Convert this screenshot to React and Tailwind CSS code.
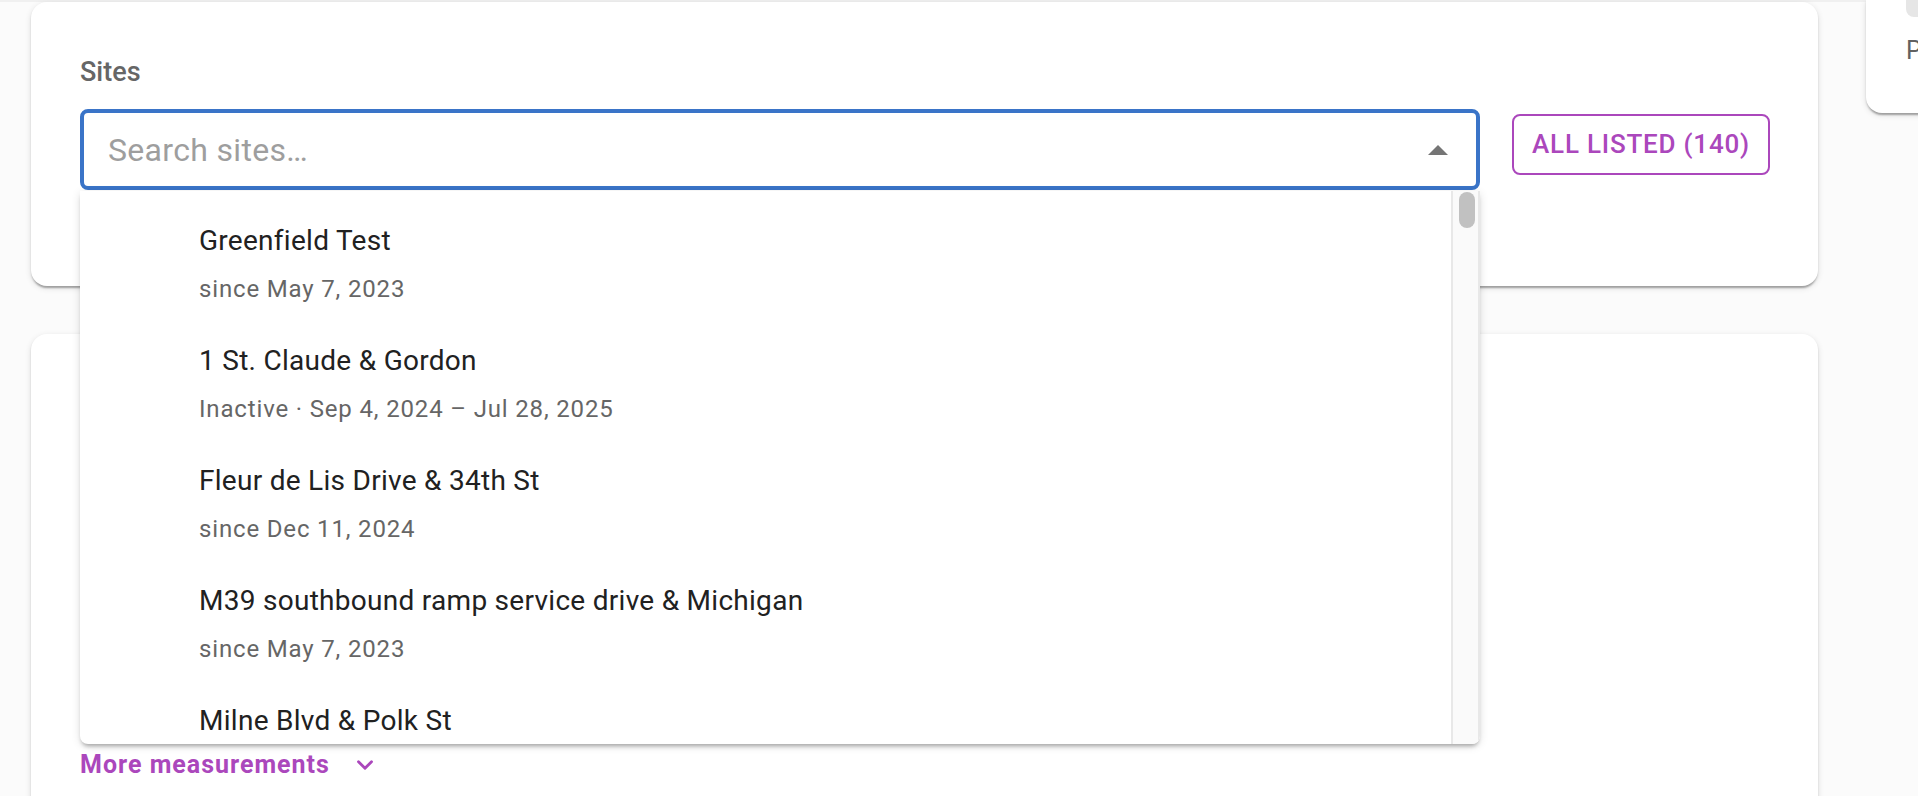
import React from 'react';
import { ChevronDown } from 'lucide-react';

const sites = [
  { name: 'Greenfield Test', detail: 'since May 7, 2023' },
  { name: '1 St. Claude & Gordon', detail: 'Inactive · Sep 4, 2024 – Jul 28, 2025' },
  { name: 'Fleur de Lis Drive & 34th St', detail: 'since Dec 11, 2024' },
  { name: 'M39 southbound ramp service drive & Michigan', detail: 'since May 7, 2023' },
  { name: 'Milne Blvd & Polk St', detail: 'since Sep 4, 2024' },
];

const cardShadow =
  'shadow-[0_4px_2px_-2px_rgba(0,0,0,0.2),0_2px_2px_0_rgba(0,0,0,0.14),0_2px_6px_0_rgba(0,0,0,0.12)]';

function SiteOption({ site }) {
  return (
    <li className="flex flex-col pl-[119px] pt-[17px] pb-[17px]">
      <span className="text-[28px] leading-[40px] tracking-[0.01em] text-[#212121] whitespace-nowrap">{site.name}</span>
      <span className="mt-[10px] text-[24px] leading-[36px] tracking-[0.035em] text-[#666666] whitespace-nowrap">{site.detail}</span>
    </li>
  );
}

function SitePicker() {
  return (
    <div className="relative flex-1">
      <div className="flex h-[81px] items-center rounded-lg border-4 border-[#3a74c8] bg-white pl-[24px] pr-[28px]">
        <input
          placeholder="Search sites…"
          className="flex-1 bg-transparent text-[32px] tracking-[0.01em] text-[#212121] outline-none placeholder:text-[#9e9e9e]"
        />
        <svg width="20" height="10" viewBox="0 0 20 10" className="shrink-0">
          <path d="M0 10 L10 0 L20 10 Z" fill="#757575" />
        </svg>
      </div>

      {/* open listbox */}
      <div className="absolute left-0 right-0 top-full z-10 mt-px flex h-[553px] overflow-hidden rounded-b-lg bg-white shadow-[0_4px_4px_-2px_rgba(0,0,0,0.3),0_2px_10px_0_rgba(0,0,0,0.12)]">
        <ul className="flex-1 overflow-hidden pt-[13px]">
          {sites.map(site => (
            <SiteOption key={site.name} site={site} />
          ))}
        </ul>
        <div className="relative w-[29px] shrink-0 border-l-2 border-r-2 border-[#e8e8e8] bg-[#fafafa]">
          <div className="absolute left-[6px] top-[1px] h-[36px] w-[16px] rounded-full bg-[#c1c1c1]" />
        </div>
      </div>
    </div>
  );
}

export default function App() {
  return (
    <div className="flex h-[796px] w-full overflow-hidden bg-[#fbfbfb] font-['Roboto',sans-serif]">
      <div className="w-[1866px] shrink-0">
        <div className="h-[2px] bg-[#f0f0f0]" />
        <div className="pl-[31px] pr-[48px]">
          {/* sites card */}
          <section className={`h-[284px] rounded-2xl bg-white pl-[49px] pr-[48px] pt-[50px] ${cardShadow}`}>
            <h2 className="text-[27px] font-medium leading-[40px] text-[#666666]">Sites</h2>
            <div className="mt-[17px] flex items-start gap-8">
              <SitePicker />
              <button className="mt-[5px] h-[61px] w-[258px] shrink-0 rounded-lg border-2 border-[#ab47bc] text-[26px] font-medium uppercase tracking-[0.03em] text-[#ab47bc]">
                All listed (140)
              </button>
            </div>
          </section>

          {/* measurements card */}
          <section className={`mt-[48px] h-[520px] rounded-2xl bg-white pl-[49px] pt-[415px] ${cardShadow}`}>
            <button className="flex items-center text-[25px] font-bold leading-[32px] tracking-[0.04em] text-[#ab47bc]">
              More measurements
              <ChevronDown className="ml-[22px] h-[26px] w-[26px]" strokeWidth={2.6} />
            </button>
          </section>
        </div>
      </div>

      <aside className={`h-[113px] w-[320px] shrink-0 rounded-bl-2xl bg-white pl-[40px] ${cardShadow}`}>
        <div className="h-[17px] rounded-bl-lg bg-[#e6e6e6]" />
        <p className="mt-[18px] text-[25px] leading-[32px] text-[#616161] whitespace-nowrap">Period</p>
      </aside>
    </div>
  );
}
